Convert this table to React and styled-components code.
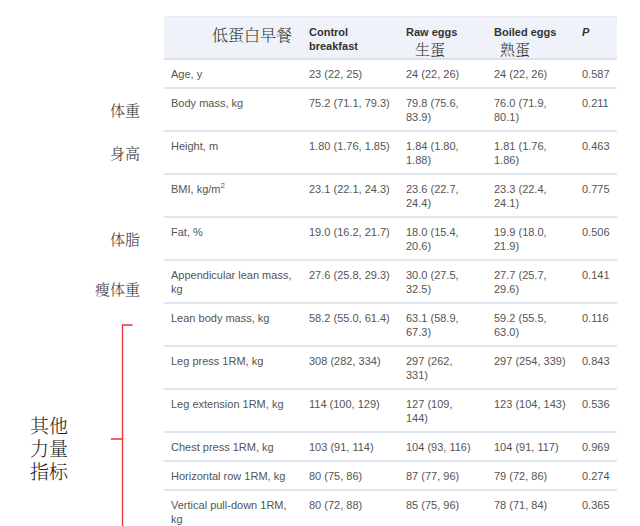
import { createGlobalStyle, styled } from 'styled-components';

const GlobalStyle = createGlobalStyle`
  html, body {
    margin: 0;
    padding: 0;
    background: #ffffff;
  }
  body {
    font-family: "Liberation Sans", Arial, sans-serif;
  }
`;

const Page = styled.div`
  width: 640px;
  height: 526px;
  overflow: hidden;
  padding-top: 16px;
  box-sizing: border-box;
`;

const Table = styled.table`
  border-collapse: collapse;
  table-layout: fixed;
  width: 617px;
  font-size: 11px;
  line-height: 14px;
  color: #555;
`;

const Note = styled.td`
  width: 164px;
  box-sizing: border-box;
  padding: ${(p) => p.$pad || '0 24px 0 0'};
  text-align: right;
  vertical-align: middle;
  font-family: "Noto Serif CJK SC", "Noto Sans CJK SC", serif;
  font-size: 15px;
  font-weight: 300;
  color: #333;
  border: none;
`;

const Head = styled.th`
  width: ${(p) => p.$w}px;
  padding: 8px ${(p) => p.$pr || 8}px 1px 7px;
  text-align: left;
  vertical-align: top;
  font-weight: bold;
  color: #333;
  background: #eff2f8;
  border-top: 1px solid #e6e9f1;
  border-bottom: 2px solid #dde2ee;
  box-sizing: border-box;
`;

const HeadTitle = styled.div`
  text-align: right;
  padding-right: 2px;
  font-family: "Noto Serif CJK SC", "Noto Sans CJK SC", serif;
  font-weight: 300;
  font-size: 16px;
  line-height: 20px;
  color: #333;
`;

const Zh = styled.div`
  margin-top: 1px;
  font-family: "Noto Serif CJK SC", "Noto Sans CJK SC", serif;
  font-weight: 300;
  font-size: 15px;
  line-height: 17px;
  color: #333;
  padding-left: ${(p) => p.$indent}px;
`;

const Cell = styled.td`
  padding: 7px ${(p) => p.$pr || 8}px 6px 7px;
  vertical-align: top;
  border-bottom: 2px solid #e1e5ef;
`;

const Italic = styled.span`
  font-style: italic;
`;

const Sup = styled.sup`
  font-size: 8px;
  line-height: 0;
`;

const GroupCell = styled.td`
  padding: 0;
  vertical-align: top;
  border: none;
`;

const Group = styled.div`
  display: flex;
  align-items: flex-start;
  height: 230px;
`;

const GroupText = styled.div`
  width: 40px;
  margin: 110px 0 0 30px;
  font-family: "Noto Serif CJK SC", "Noto Sans CJK SC", serif;
  font-size: 19px;
  font-weight: 300;
  line-height: 23px;
  color: #222;
`;

const BracketBox = styled.svg`
  margin: 21px 0 0 41px;
  display: block;
`;

function Bracket() {
  return (
    <BracketBox width="24" height="210" viewBox="0 0 24 210">
      <path
        d="M21.5 1 H11.5 V210 M11.5 115 H0"
        fill="none"
        stroke="#e8343c"
        strokeWidth="1.4"
      />
    </BracketBox>
  );
}

const rows = [
  ['Age, y', '23 (22, 25)', '24 (22, 26)', '24 (22, 26)', '0.587', ''],
  ['Body mass, kg', '75.2 (71.1, 79.3)', '79.8 (75.6, 83.9)', '76.0 (71.9, 80.1)', '0.211', '体重'],
  ['Height, m', '1.80 (1.76, 1.85)', '1.84 (1.80, 1.88)', '1.81 (1.76, 1.86)', '0.463', '身高'],
  ['BMI', '23.1 (22.1, 24.3)', '23.6 (22.7, 24.4)', '23.3 (22.4, 24.1)', '0.775', ''],
  ['Fat, %', '19.0 (16.2, 21.7)', '18.0 (15.4, 20.6)', '19.9 (18.0, 21.9)', '0.506', '体脂'],
  ['Appendicular lean mass, kg', '27.6 (25.8, 29.3)', '30.0 (27.5, 32.5)', '27.7 (25.7, 29.6)', '0.141', '瘦体重'],
  ['Lean body mass, kg', '58.2 (55.0, 61.4)', '63.1 (58.9, 67.3)', '59.2 (55.5, 63.0)', '0.116', null],
  ['Leg press 1RM, kg', '308 (282, 334)', '297 (262, 331)', '297 (254, 339)', '0.843', null],
  ['Leg extension 1RM, kg', '114 (100, 129)', '127 (109, 144)', '123 (104, 143)', '0.536', null],
  ['Chest press 1RM, kg', '103 (91, 114)', '104 (93, 116)', '104 (91, 117)', '0.969', null],
  ['Horizontal row 1RM, kg', '80 (75, 86)', '87 (77, 96)', '79 (72, 86)', '0.274', null],
  ['Vertical pull-down 1RM, kg', '80 (72, 88)', '85 (75, 96)', '78 (71, 84)', '0.365', null],
];

function Label({ text }) {
  if (text === 'BMI') {
    return (
      <>
        BMI, kg/m<Sup>2</Sup>
      </>
    );
  }
  return text;
}

export default function App() {
  return (
    <Page>
      <GlobalStyle />
      <Table>
        <thead>
          <tr>
            <Note as="th" />
            <Head $w={138}>
              <HeadTitle>低蛋白早餐</HeadTitle>
            </Head>
            <Head $w={97}>Control breakfast</Head>
            <Head $w={88} $pr={13}>
              Raw eggs
              <Zh $indent={9}>生蛋</Zh>
            </Head>
            <Head $w={88}>
              Boiled eggs
              <Zh $indent={6}>熟蛋</Zh>
            </Head>
            <Head $w={42}>
              <Italic>P</Italic>
            </Head>
          </tr>
        </thead>
        <tbody>
          {rows.map(([label, a, b, c, p, note], i) => (
            <tr key={label}>
              {note !== null && (
                <Note $pad={note === '瘦体重' ? '14px 24px 0 0' : undefined}>{note}</Note>
              )}
              {i === 6 && (
                <GroupCell rowSpan={6}>
                  <Group>
                    <GroupText>其他力量指标</GroupText>
                    <Bracket />
                  </Group>
                </GroupCell>
              )}
              <Cell>
                <Label text={label} />
              </Cell>
              <Cell>{a}</Cell>
              <Cell $pr={13}>{b}</Cell>
              <Cell>{c}</Cell>
              <Cell>{p}</Cell>
            </tr>
          ))}
        </tbody>
      </Table>
    </Page>
  );
}
